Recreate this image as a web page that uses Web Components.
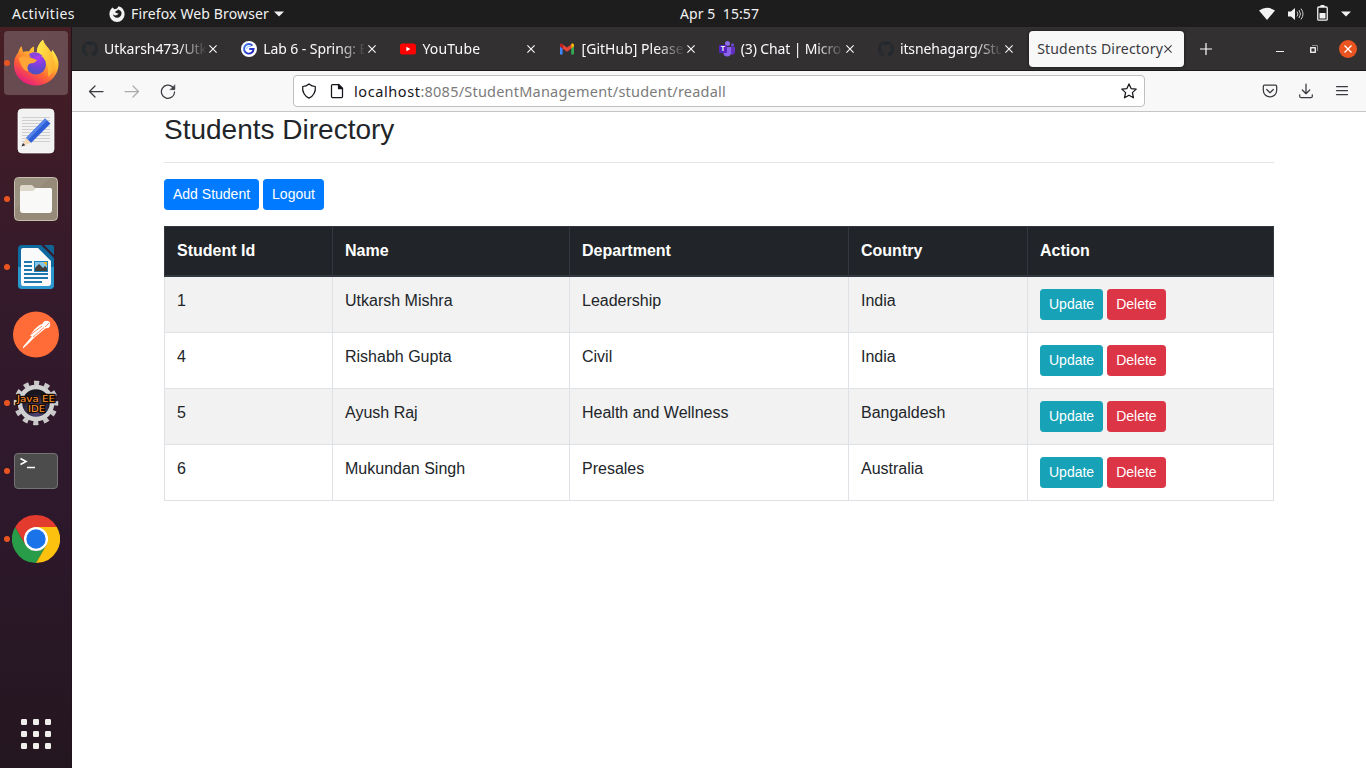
<!DOCTYPE html>
<html lang="en">
<head>
<meta charset="utf-8">
<title>Students Directory</title>
<style>
html,body{margin:0;height:100%;overflow:hidden}
body{font-family:"Noto Sans","Open Sans",sans-serif;background:#fff}
</style>
</head>
<body>
<desktop-shell></desktop-shell>
<script>
const define=(name,html,ready)=>{
  const tpl=document.createElement('template');
  tpl.innerHTML=html;
  customElements.define(name,class extends HTMLElement{
    connectedCallback(){
      if(this.shadowRoot)return;
      this.attachShadow({mode:'open'}).appendChild(tpl.content.cloneNode(true));
      if(ready)ready.call(this,this.shadowRoot);
    }
  });
};

/* Label that spreads its letters to fill the width given in its w attribute */
define('fit-text',`<style>:host{display:inline-block;white-space:pre;flex:none}span{display:inline-block}</style><span><slot></slot></span>`,function(root){
  const s=root.querySelector('span'),w=+this.getAttribute('w');
  this.style.width=w+'px';
  const n=this.textContent.length,cur=s.getBoundingClientRect().width;
  if(cur&&n)s.style.letterSpacing=((w-cur)/n)+'px';
});

const github='<svg width="16" height="16" viewBox="0 0 16 16"><path fill="#24292e" d="M8 0C3.58 0 0 3.58 0 8c0 3.54 2.29 6.53 5.47 7.59.4.07.55-.17.55-.38v-1.49c-2.01.37-2.53-.49-2.69-.94-.09-.23-.48-.94-.82-1.13-.28-.15-.68-.52-.01-.53.63-.01 1.08.58 1.23.82.72 1.21 1.87.87 2.33.66.07-.52.28-.87.51-1.07-1.78-.2-3.64-.89-3.64-3.95 0-.87.31-1.59.82-2.15-.08-.2-.36-1.02.08-2.12 0 0 .67-.21 2.2.82a7.6 7.6 0 0 1 4 0c1.53-1.04 2.2-.82 2.2-.82.44 1.1.16 1.92.08 2.12.51.56.82 1.27.82 2.15 0 3.07-1.87 3.75-3.65 3.95.29.25.54.73.54 1.48v2.19c0 .21.15.46.55.38A8 8 0 0 0 16 8c0-4.42-3.58-8-8-8z"/></svg>';
const icons={
github,
g:'<svg width="16" height="16" viewBox="0 0 16 16"><defs><linearGradient id="a" y2="1"><stop stop-color="#3f7bea"/><stop offset="1" stop-color="#1c16b8"/></linearGradient></defs><circle cx="8" cy="8" r="8" fill="#fff"/><path d="M11.4 4.6A4.8 4.8 0 1 0 12.6 8H8.2" fill="none" stroke="url(#a)" stroke-width="1.9"/><path d="M10 5.8A2.8 2.8 0 0 0 5.6 8" fill="none" stroke="#5ba8f5" stroke-width=".8"/></svg>',
youtube:'<svg width="16" height="16" viewBox="0 0 16 16"><rect y="2.5" width="16" height="11" rx="2.6" fill="#f00"/><path d="M6.4 5.7v4.6L10.4 8z" fill="#fff"/></svg>',
gmail:'<svg width="16" height="16" viewBox="1 0 16 16"><path fill="#4285f4" d="M1 13.5h2.6V7.4L1 5.5z"/><path fill="#34a853" d="M12.2 13.5H15v-8l-2.8 1.9z"/><path fill="#fbbc04" d="M12.2 4v3.6L15 5.5V4c0-1.6-1.7-2-2.8-1.1z"/><path fill="#ea4335" d="M3.6 7.6V3.4L8 6.6l4.2-3.2v4.2L8 10.8z"/><path fill="#c5221f" d="M1 4v1.5l2.6 2.1V3C2.5 2.1 1 2.5 1 4z"/></svg>',
teams:'<svg width="16" height="16" viewBox="0 0 16 16"><circle cx="13.5" cy="4" r="1.7" fill="#6545cb"/><path d="M10 6h6v5a3 3 0 0 1-4 2.6z" fill="#6130bd"/><circle cx="8.5" cy="2.6" r="2.5" fill="#8b6de5"/><path d="M4.5 6H12v5.7a4 4 0 0 1-7.5 1.8z" fill="#8a63ea"/><rect y="4" width="8" height="8" rx="1" fill="#5526be"/><text x="4" y="10.4" font-size="7" font-weight="700" text-anchor="middle" fill="#fff" font-family="Liberation Sans">T</text></svg>'
};

define('browser-tab',`<style>
:host{display:flex;align-items:center;box-sizing:border-box;flex:0 0 155.2px;height:36px;margin-right:4px;padding-left:8px;border-radius:4px;color:#fbfbfe;font-size:14px}
:host([active]){background:#f8f8f8;color:#3a3a40;box-shadow:0 0 3px #111}
.ico{width:22px;height:16px;flex:none}:host([active]) .ico{display:none}
.ico svg{display:block}
.label{width:101px;height:22px;line-height:22px;overflow:hidden;flex:none;-webkit-mask:linear-gradient(90deg,#000 74%,transparent 102%);mask:linear-gradient(90deg,#000 74%,transparent 102%)}
:host([active]) .label{width:127px;-webkit-mask:none;mask:none}
.x{width:8px;height:8px;margin-left:4px;flex:none}:host([active]) .x{margin-left:0}
</style><span class="ico"></span><span class="label"><slot></slot></span><svg class="x" viewBox="0 0 8 8"><path d="M.4.4l7.2 7.2M7.6.4L.4 7.6" stroke="currentColor" stroke-width="1.1"/></svg>`,function(root){
  root.querySelector('.ico').innerHTML=icons[this.getAttribute('icon')]||'';
});

define('top-bar',`<style>
:host{display:flex;box-sizing:border-box;height:27px;background:#1d1d1d;color:#f2f2f2;font-size:14px;align-items:center;line-height:26px;padding:0 15px 0 12px}
svg{display:block;flex:none}
.l,.r{display:flex;align-items:center;flex:1}.r{justify-content:flex-end}
.fox{margin:0 6px 0 34px}
.caret{margin-left:5px}
.clock{margin-left:76px}
</style>
<div class="l"><fit-text w="63">Activities</fit-text>
<svg class="fox" width="16" height="16" viewBox="0 0 16 16"><path fill="#f2f2f2" d="M3.400 1.600L5.600 3.200 8 2.600 9.600.300C13 1 15.600 4.300 15.600 8.300A7.600 7.600 0 0 1 .4 8.300C.4 5.700 1.500 3.500 3.400 1.600z"/><path d="M9.200 3.600C12.200 4.500 13 6.600 12.400 8.600A4.400 4.400 0 0 1 3.900 8.300C5 9.600 6.500 9.700 8 9l1.700-1.300L7.400 6.900 5.800 6.100 8 4.500z" fill="#1d1d1d"/></svg>
<fit-text w="138">Firefox Web Browser</fit-text><svg class="caret" width="10" height="6" viewBox="0 0 10 6"><path d="M0 .5h10L5 5.500z" fill="#f2f2f2"/></svg></div>
<fit-text class="clock" w="79">Apr 5  15:57</fit-text>
<div class="r">
<svg width="16" height="14" viewBox="0 0 16 14"><path d="M0 3.500Q8-2 16 3.500L8 13z" fill="#f2f2f2"/></svg>
<svg style="margin-left:13px" width="16" height="14" viewBox="0 0 16 14"><path d="M0 4.500h3L7 1v12L3 9.500H0z" fill="#f2f2f2"/><path d="M9 4.500q2 2.500 0 5M11 3q3 4 0 8M13 1.600q4 5.400 0 10.800" fill="none" stroke="#ccc" stroke-width="1"/></svg>
<svg style="margin-left:13px;position:relative;top:-1px" width="11" height="16" viewBox="0 0 11 16"><path d="M3.500 0h4v2h-4z" fill="#f2f2f2"/><rect x=".75" y="2" width="9.500" height="13.200" rx="1" fill="none" stroke="#f2f2f2" stroke-width="1.300"/><path d="M2.500 8h6v5.500h-6z" fill="#f2f2f2"/></svg>
<svg style="margin-left:13px" width="10" height="6" viewBox="0 0 10 6"><path d="M0 .5h10L5 5.500z" fill="#f2f2f2"/></svg>
</div>`);

define('dock-item',`<style>
:host{display:flex;position:relative;width:64px;height:64px;align-items:center;justify-content:center;border-radius:4px;flex:none}
:host([focused]){background:#684b50}
:host([running])::before{content:"";position:absolute;left:-.5px;top:29px;width:6px;height:6px;border-radius:50%;background:#e95420}
</style><slot></slot>`);

define('app-dock',`<style>
:host{display:flex;flex-direction:column;box-sizing:border-box;width:72px;flex:none;padding:4px 0 2px 4px;gap:4px;background:linear-gradient(#471f24 0,#401c27 12%,#341a2b 36%,#2d182c 65%,#24161f 100%);box-shadow:inset -1px 0 #21121c}
svg{display:block}.grow{flex:1}
</style>
<dock-item focused running><svg width="48" height="48" viewBox="0 0 48 48"><defs><linearGradient id="f1" x1=".8" x2=".25" y1=".1" y2="1"><stop stop-color="#fff44f"/><stop offset=".35" stop-color="#ffb52d"/><stop offset=".65" stop-color="#ff6036"/><stop offset="1" stop-color="#e31587"/></linearGradient><radialGradient id="f2" cx=".6" cy=".15" r=".9"><stop stop-color="#b53bf0"/><stop offset=".5" stop-color="#7542d8"/><stop offset="1" stop-color="#4354bb"/></radialGradient><linearGradient id="f3" y2="1"><stop stop-color="#fff04c"/><stop offset="1" stop-color="#ffa62c"/></linearGradient></defs>
<path d="M6.500 13c.5-3 3-6 3-6l1.500 6c2-1 4-1 6-.5 1.500-3 3.500-4.500 5-5v5.500h3C25 8 28 3.500 31 .8c1 5 6 8 8 13l1.500-3C44 16 46.500 20 46.500 25 46.500 37 36.500 46.500 24 46.500S2 37 2 26C2 20 3.500 17 6.500 13z" fill="url(#f1)"/><path d="M31 .8c1 5 6.500 8.500 9 14 4.500 11 2 19-4 23 1-8-1-13-4-17-4-5-8-5-7-10 .8-4 3-7.500 6-10z" fill="url(#f3)"/><circle cx="24" cy="25.500" r="10" fill="url(#f2)"/><path d="M6.500 19c4-3 9-1 12-.5l6.500 2.500c-1 2.500-4 3.500-7 3.500-3 2-3 5-1.500 8-5-1-7.500-5-10-13.500z" fill="#ffa436"/><path d="M17 15c5-3 10-2 14 2.500-4-1.500-8-1-9 1.500l-4-1.500z" fill="#8945dc"/></svg></dock-item>
<dock-item><svg width="48" height="48" viewBox="0 0 48 48"><rect x="6" y="2" width="36" height="44" rx="4" fill="#f2f2f2" stroke="#fff" stroke-width=".7"/><path d="M10 10.500h28M10 13.500h28M10 16.500h28M10 19.500h28M10 22.500h28M10 25.500h28M10 28.500h28M10 31.500h28M10 34.500h28" stroke="#cfcfcf"/><path d="M14 31L33 11.500l5.500 5L19 36z" fill="#2f5fd6"/><path d="M14 31L33 11.500l2 2L16 33z" fill="#5684e8"/><path d="M14 31l-4 8 9-3z" fill="#f6d9b8"/><path d="M11 36l-1.500 3.500 3.800-1.200z" fill="#333"/></svg></dock-item>
<dock-item running><svg width="48" height="48" viewBox="0 0 48 48"><rect x="2.500" y="2.500" width="43" height="43" rx="4" fill="#958b78" stroke="#c6beaf"/><path d="M3 3h35L3 34z" fill="#a19887" opacity=".55"/><path d="M8 12q0-2 2-2h10l3 3h15q2 0 2 2v8H8z" fill="#ddd8ca"/><path d="M8 16h13l3-3h14q2 0 2 2v20q0 3-3 3H11q-3 0-3-3z" fill="#f9f9f7"/></svg></dock-item>
<dock-item running><svg width="48" height="48" viewBox="0 0 48 48"><path d="M10 2h19l13 13v27q0 4-4 4H10q-4 0-4-4V6q0-4 4-4z" fill="#0e6a9f"/><path d="M6 24h36v18q0 4-4 4H10q-4 0-4-4z" fill="#2b97cf"/><path d="M32 2h8q2 0 2 2v8z" fill="#126493"/><path d="M11 5h15l13 13v22q0 3-3 3H11q-2 0-2-3V7q0-2 2-2z" fill="#fafafa"/><path d="M12 19h8M12 23h8M12 27h8M12 31h24M12 35h24M12 39h18" stroke="#1d78ae" stroke-width="2"/><path d="M22 18h14v11H22z" fill="#1681bd"/><path d="M23 19h12v6H23z" fill="#83c5e8"/><path d="M31 19h4v4z" fill="#f6b62c"/><path d="M23 28v-3l4-4 4 4 2-2 2 2v3z" fill="#443e38"/></svg></dock-item>
<dock-item><svg width="48" height="48" viewBox="0 0 48 48"><circle cx="24" cy="23.500" r="23" fill="#ff6c37"/><circle cx="34.500" cy="13.500" r="3.700" fill="#fff"/><path d="M32 12c-6 2-11 7-14 13l5 1 11-9z" fill="#fff"/><path d="M21 24c-4 5-8 9-10 12v1.500l4-3.500 8-8z" fill="#fff"/><path d="M17.500 24.500L30 15M21 26l11-9.500M33 16l4-4" stroke="#ff6c37" stroke-width=".8"/></svg></dock-item>
<dock-item running><svg width="48" height="48" viewBox="0 0 48 48"><defs><radialGradient id="j" cy=".7"><stop stop-color="#63569b"/><stop offset="1" stop-color="#17151e"/></radialGradient></defs><circle cx="24" cy="24" r="20" fill="none" stroke="#c9c9c9" stroke-width="4.500" stroke-dasharray="5.200 5.272" stroke-dashoffset="2.600"/><circle cx="24" cy="24" r="16" fill="url(#j)" stroke="#d1d1d1" stroke-width="4.500"/><g font-family="DejaVu Sans" font-size="9.500" fill="#ff9434" stroke="#180b02" stroke-width="2.600" stroke-linejoin="round" paint-order="stroke" text-anchor="middle"><text x="24" y="22.500" textLength="38" lengthAdjust="spacingAndGlyphs">Java EE</text><text x="24.500" y="32.500" textLength="17" lengthAdjust="spacingAndGlyphs">IDE</text></g></svg></dock-item>
<dock-item running><svg width="48" height="48" viewBox="0 0 48 48"><rect x="2.500" y="6.500" width="43" height="35" rx="3.500" fill="#4c4c4c" stroke="#747474"/><path d="M8.500 11.500l5.500 3-5.500 3M15 20.500h8" fill="none" stroke="#fff" stroke-width="1.600"/></svg></dock-item>
<dock-item running><svg width="48" height="48" viewBox="0 0 48 48"><path d="M34.390 30L24 48A24 24 0 0 1 3.215 12L13.610 30q10 12 20.780 0z" fill="#289c48"/><path d="M24 12h20.785A24 24 0 0 1 24 48L34.390 30z" fill="#fcc10f"/><path d="M3.215 12A24 24 0 0 1 44.785 12H24L13.600 30z" fill="#e33b2e"/><circle cx="24" cy="24" r="12" fill="#fff"/><circle cx="24" cy="24" r="9.700" fill="#1a73e8"/></svg></dock-item>
<span class="grow"></span>
<dock-item><svg width="30" height="30" viewBox="0 0 30 30" fill="#f0efeb"><g id="r"><rect width="6" height="6" rx="1.200"/><rect x="12" width="6" height="6" rx="1.200"/><rect x="24" width="6" height="6" rx="1.200"/></g><use href="#r" y="12"/><use href="#r" y="24"/></svg></dock-item>`);

define('tab-strip',`<style>
:host{display:flex;align-items:center;box-sizing:border-box;height:44px;padding:0 9px 0 2px;background:#333031;border-bottom:1px solid #1c1b1b;color:#fbfbfe}
svg{display:block;flex:none}.grow{flex:1}
</style>
<browser-tab icon="github"><fit-text w="103">Utkarsh473/Utk</fit-text></browser-tab>
<browser-tab icon="g"><fit-text w="104">Lab 6 - Spring: E</fit-text></browser-tab>
<browser-tab icon="youtube"><fit-text w="58">YouTube</fit-text></browser-tab>
<browser-tab icon="gmail"><fit-text w="102">[GitHub] Please</fit-text></browser-tab>
<browser-tab icon="teams"><fit-text w="107">(3) Chat | Micros</fit-text></browser-tab>
<browser-tab icon="github"><fit-text w="104">itsnehagarg/Stu</fit-text></browser-tab>
<browser-tab active><fit-text w="126">Students Directory</fit-text></browser-tab>
<svg style="margin-left:12px" width="12" height="12" viewBox="0 0 12 12"><path d="M6 0v12M0 6h12" stroke="#fff" stroke-width="1.200"/></svg>
<span class="grow"></span>
<svg width="8" height="8" viewBox="0 0 8 8"><path d="M0 6.500h8" stroke="#eee"/></svg>
<svg style="margin-left:26px" width="8" height="8" viewBox="0 0 8 8" fill="none"><path d="M2 .5h5.500V6" stroke="#8c8c8c"/><rect x=".75" y="2.750" width="4.500" height="4.500" stroke="#fff" stroke-width="1.300"/></svg>
<svg style="margin-left:21px" width="18" height="18" viewBox="0 0 18 18"><circle cx="9" cy="9" r="9" fill="#e95420"/><path d="M5.500 5.500l7 7M12.500 5.500l-7 7" stroke="#fff" stroke-width="1.300"/></svg>`);

define('nav-bar',`<style>
:host{display:flex;align-items:center;box-sizing:border-box;height:41px;padding:0 16px;background:#f8f8f8;border-bottom:1px solid #c5c5c5;color:#3a3a40}
svg{display:block;flex:none;fill:none;stroke:currentColor;stroke-width:1.250;stroke-linecap:round;stroke-linejoin:round}
.url{display:flex;align-items:center;box-sizing:border-box;width:852px;height:32px;margin-left:117px;border:1px solid #bfbfbf;border-radius:4px;background:#fff;padding:0 7px;color:#15141a;font-size:14.500px}
.url .p{color:#7b7b7b}.grow{flex:1}
</style>
<svg width="16" height="16" viewBox="0 0 16 16"><path d="M15 8.500H1.500M7 3L1.500 8.500 7 14"/></svg>
<svg style="margin-left:20px;opacity:.4" width="16" height="16" viewBox="0 0 16 16"><path d="M1 8.500h13.500M9 3l5.500 5.500L9 14"/></svg>
<svg style="margin-left:20px" width="16" height="16" viewBox="0 0 16 16"><path d="M14.600 9A6.600 6.600 0 1 1 12.600 4"/><path d="M14.900 2v4.700h-4.700z" fill="currentColor" stroke-width=".5"/></svg>
<div class="url"><svg width="16" height="16" viewBox="0 0 16 16"><path d="M8 1Q10.800 3.300 14.300 3.500C15 9 12 13.500 8 15.200 4 13.500 1 9 1.700 3.500 5.200 3.300 8 1 8 1z"/></svg>
<svg style="margin-left:12px" width="16" height="16" viewBox="0 0 16 16"><path d="M3.500 1.500h6l4 4v8q0 1-1 1h-9q-1 0-1-1v-11q0-1 1-1z"/><path d="M9.500 1.500v4h4z" fill="currentColor"/></svg>
<fit-text style="margin-left:9px" w="66.500">localhost</fit-text><fit-text class="p" w="305.500">:8085/StudentManagement/student/readall</fit-text>
<span class="grow"></span><svg width="16" height="16" viewBox="0 0 16 16"><path d="M8 .9l2.100 4.700 5.100.5-3.800 3.500 1.100 5.200L8 12.200l-4.500 2.600 1.100-5.200L.8 6.100l5.100-.5z"/></svg></div>
<span class="grow"></span>
<svg width="16" height="16" viewBox="0 0 16 16"><path d="M2.500 2.200h11q1.200 0 1.200 1.200v3.800a6.700 6.700 0 0 1-13.400 0V3.400q0-1.200 1.200-1.200z"/><path d="M4.700 6.500L8 9.700l3.300-3.200"/></svg>
<svg style="margin-left:20px" width="16" height="16" viewBox="0 0 16 16"><path d="M8 1v9.500M4.300 7L8 10.700 11.700 7M1.700 11.800v1.400q0 1.500 1.500 1.500h9.600q1.500 0 1.500-1.500v-1.400"/></svg>
<svg style="margin-left:20px" width="16" height="16" viewBox="0 0 16 16"><path d="M2.500 3.500h11M2.500 7.500h11M2.500 11.500h11"/></svg>`);

define('action-button',`<style>
:host{display:inline-block;box-sizing:border-box;height:31px;padding:4px 8px;border:1px solid #007bff;background:#007bff;border-radius:3.200px;color:#fff;font-size:14px;line-height:21px}
:host([kind=info]){background:#17a2b8;border-color:#17a2b8}
:host([kind=danger]){background:#dc3545;border-color:#dc3545}
</style><slot></slot>`);

define('student-table',`<style>
:host{display:block}
table{width:1110px;table-layout:fixed;border-collapse:collapse;border:1px solid #dee2e6}
th,td{border:1px solid #dee2e6;padding:12px;text-align:left;vertical-align:top;line-height:24px}
th{background:#212529;color:#fff;border-color:#32383e;border-bottom-width:2px;vertical-align:bottom}
tbody tr:nth-child(odd){background:#f2f2f2}
.act{display:flex;gap:4px}
</style><table><colgroup><col style="width:168px"><col style="width:237px"><col style="width:279px"><col style="width:179px"><col></colgroup><thead><tr><th>Student Id</th><th>Name</th><th>Department</th><th>Country</th><th>Action</th></tr></thead><tbody></tbody></table>`,function(root){
  const rows=[[1,'Utkarsh Mishra','Leadership','India'],[4,'Rishabh Gupta','Civil','India'],[5,'Ayush Raj','Health and Wellness','Bangaldesh'],[6,'Mukundan Singh','Presales','Australia']];
  root.querySelector('tbody').innerHTML=rows.map(r=>'<tr>'+r.map(c=>'<td>'+c+'</td>').join('')+'<td><div class="act"><action-button kind="info">Update</action-button><action-button kind="danger">Delete</action-button></div></td></tr>').join('');
});

define('students-page',`<style>
:host{display:block;flex:1;padding-left:92px;background:#fff;color:#212529;font:16px/1.5 "Liberation Sans",Arial,sans-serif}
h3{margin:0;height:33.600px;font-size:28px;font-weight:500;line-height:35.600px}
hr{margin:16px 0;border:0;border-top:1px solid #e5e5e5;width:1110px}
.bar{display:flex;gap:4px;margin-bottom:16px}
</style><h3>Students Directory</h3><hr><div class="bar"><action-button>Add Student</action-button><action-button>Logout</action-button></div><student-table></student-table>`);

define('desktop-shell',`<style>
:host{display:flex;flex-direction:column;width:1366px;height:768px;overflow:hidden}
.main{display:flex;flex:1;min-height:0}
.win{display:flex;flex-direction:column;flex:1;min-width:0}
</style><top-bar></top-bar><div class="main"><app-dock></app-dock><div class="win"><tab-strip></tab-strip><nav-bar></nav-bar><students-page></students-page></div></div>`);
</script>
</body>
</html>
